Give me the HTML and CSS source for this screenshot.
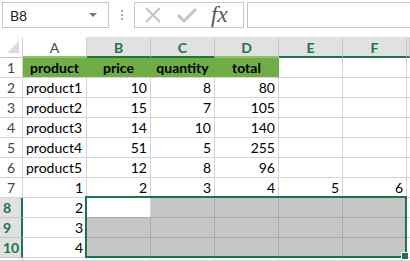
FILE: index.html
```html
<!DOCTYPE html>
<html>
  <head>
    <meta charset="utf-8">
    <title>Sheet</title>
    <link rel="stylesheet" href="styles.css">
  </head>
  <body>
    <div class="toolbar">
      <div class="name_box">
        <span>B8</span>
        <span class="caret"></span>
      </div>
      <div class="grip"><i></i><i></i><i></i></div>
      <div class="fx_buttons">
        <svg width="20" height="18" viewBox="0 0 20 18" fill="none" stroke="#c4c4c4" stroke-width="2">
          <path d="M3 2 17 16M17 2 3 16"></path>
        </svg>
        <svg width="22" height="18" viewBox="0 0 22 18" fill="none" stroke="#c4c4c4" stroke-width="3" stroke-linejoin="miter">
          <path d="M2 9 8 15 20 3"></path>
        </svg>
        <span class="fx">fx</span>
      </div>
      <div class="formula"></div>
    </div>

    <div class="sheet">
      <div class="corner"><div class="tri"></div></div>
      <div class="col_head light">A</div>
      <div class="col_head sel">B</div>
      <div class="col_head sel">C</div>
      <div class="col_head sel light">D</div>
      <div class="col_head sel">E</div>
      <div class="col_head sel">F</div>
      <div class="col_head sel"></div>

      <div class="row_head">1</div>
      <div class="cell head">product</div>
      <div class="cell head">price</div>
      <div class="cell head">quantity</div>
      <div class="cell head">total</div>
      <div class="cell"></div>
      <div class="cell"></div>
      <div class="cell"></div>

      <div class="row_head">2</div>
      <div class="cell">product1</div>
      <div class="cell num">10</div>
      <div class="cell num">8</div>
      <div class="cell num">80</div>
      <div class="cell"></div>
      <div class="cell"></div>
      <div class="cell"></div>

      <div class="row_head">3</div>
      <div class="cell">product2</div>
      <div class="cell num">15</div>
      <div class="cell num">7</div>
      <div class="cell num">105</div>
      <div class="cell"></div>
      <div class="cell"></div>
      <div class="cell"></div>

      <div class="row_head">4</div>
      <div class="cell">product3</div>
      <div class="cell num">14</div>
      <div class="cell num">10</div>
      <div class="cell num">140</div>
      <div class="cell"></div>
      <div class="cell"></div>
      <div class="cell"></div>

      <div class="row_head">5</div>
      <div class="cell">product4</div>
      <div class="cell num">51</div>
      <div class="cell num">5</div>
      <div class="cell num">255</div>
      <div class="cell"></div>
      <div class="cell"></div>
      <div class="cell"></div>

      <div class="row_head">6</div>
      <div class="cell">product5</div>
      <div class="cell num">12</div>
      <div class="cell num">8</div>
      <div class="cell num">96</div>
      <div class="cell"></div>
      <div class="cell"></div>
      <div class="cell"></div>

      <div class="row_head">7</div>
      <div class="cell num">1</div>
      <div class="cell num">2</div>
      <div class="cell num">3</div>
      <div class="cell num">4</div>
      <div class="cell num">5</div>
      <div class="cell num">6</div>
      <div class="cell"></div>

      <div class="row_head sel">8</div>
      <div class="cell num">2</div>
      <div class="cell active"></div>
      <div class="cell shade"></div>
      <div class="cell shade"></div>
      <div class="cell shade"></div>
      <div class="cell shade"></div>
      <div class="cell"></div>

      <div class="row_head sel">9</div>
      <div class="cell num">3</div>
      <div class="cell shade"></div>
      <div class="cell shade"></div>
      <div class="cell shade"></div>
      <div class="cell shade"></div>
      <div class="cell shade"></div>
      <div class="cell"></div>

      <div class="row_head sel">10</div>
      <div class="cell num">4</div>
      <div class="cell shade"></div>
      <div class="cell shade"></div>
      <div class="cell shade"></div>
      <div class="cell shade"></div>
      <div class="cell shade"></div>
      <div class="cell"></div>

      <div class="row_head"></div>
      <div class="cell"></div>
      <div class="cell"></div>
      <div class="cell"></div>
      <div class="cell"></div>
      <div class="cell"></div>
      <div class="cell"></div>
      <div class="cell"></div>

      <div class="selection"><div class="handle"></div></div>
    </div>
  </body>
</html>
```

FILE: styles.css
```css
html, body {
  margin: 0;
  padding: 0;
  background: white;
  overflow: hidden;

  font-family: Lato, "Liberation Sans", sans-serif;
  font-size: 14px;
  color: black;
}

.toolbar {
  height: 37px;
  box-sizing: border-box;
  padding-top: 2px;
  display: flex;
  align-items: flex-start;
}

.name_box {
  margin-left: 2px;
  width: 107px;
  height: 26px;
  box-sizing: border-box;
  border: 1px solid #c6c6c6;
  display: flex;
  align-items: center;
  justify-content: space-between;
  padding: 0 11px 0 7px;
  color: #222;
}

.caret {
  width: 0;
  height: 0;
  border-left: 4px solid transparent;
  border-right: 4px solid transparent;
  border-top: 4px solid #777;
}

.grip {
  width: 25px;
  height: 26px;
  display: flex;
  flex-direction: column;
  align-items: center;
  justify-content: center;
  gap: 2px;
}

.grip i {
  width: 2px;
  height: 2px;
  background: #aaa;
}

.fx_buttons {
  width: 110px;
  height: 26px;
  box-sizing: border-box;
  border: 1px solid #c6c6c6;
  display: flex;
  align-items: center;
  padding-left: 8px;
  gap: 13px;
}

.fx {
  font-family: "Liberation Serif", serif;
  font-style: italic;
  font-size: 23px;
  line-height: 24px;
  color: #555;
}

.formula {
  margin-left: 3px;
  flex: 1;
  height: 26px;
  box-sizing: border-box;
  border: 1px solid #c6c6c6;
  border-right: none;
}

.sheet {
  position: relative;
  height: 224px;
  overflow: hidden;
  display: grid;
  grid-template-columns: 23px repeat(6, 64px) 3px;
  grid-template-rows: 21px repeat(10, 20px) 3px;
}

.sheet > div {
  box-sizing: border-box;
}

.corner {
  border-right: 1px solid #d4d4d4;
  border-bottom: 1px solid #c6c6c6;
  display: flex;
  align-items: flex-end;
  justify-content: flex-end;
  padding: 0 3px 4px 0;
}

.tri {
  width: 12px;
  height: 12px;
  background: #dcdcdc;
  clip-path: polygon(100% 0, 100% 100%, 0 100%);
}

.col_head {
  border-right: 1px solid #d4d4d4;
  border-bottom: 2px solid #217346;
  display: flex;
  align-items: center;
  justify-content: center;
  color: #444;
  padding-top: 1px;
}

.col_head.light {
  border-bottom-color: #8cc46a;
}

.col_head.sel {
  background: #e1e1e1;
  color: #217346;
  font-weight: bold;
  border-right-color: #c6c6c6;
}

.row_head {
  border-right: 1px solid #d4d4d4;
  border-bottom: 1px solid #d4d4d4;
  display: flex;
  align-items: center;
  justify-content: center;
  color: #444;
}

.row_head.sel {
  background: #e1e1e1;
  color: #217346;
  font-weight: bold;
  border-right: 2px solid #217346;
  border-bottom-color: #c6c6c6;
  justify-content: flex-start;
  padding-left: 3px;
}

.cell {
  border-right: 1px solid #d4d4d4;
  border-bottom: 1px solid #d4d4d4;
  display: flex;
  align-items: flex-end;
  padding: 0 3px 1px 3px;
  white-space: nowrap;
  overflow: hidden;
}

.cell.num {
  justify-content: flex-end;
}

.cell.head {
  background: #70ad47;
  border-right-color: #70ad47;
  font-weight: bold;
  justify-content: center;
}

.cell.shade {
  background: #c6c6c6;
  border-right-color: #a9a9a9;
  border-bottom-color: #a9a9a9;
}

.cell.active {
  border-bottom-color: #a9a9a9;
}

.selection {
  position: absolute;
  left: 85px;
  top: 159px;
  width: 322px;
  height: 62px;
  border: 2px solid #217346;
  box-sizing: border-box;
}

.handle {
  position: absolute;
  right: -4px;
  bottom: -4px;
  width: 6px;
  height: 6px;
  background: #217346;
  border: 1px solid white;
}
```
